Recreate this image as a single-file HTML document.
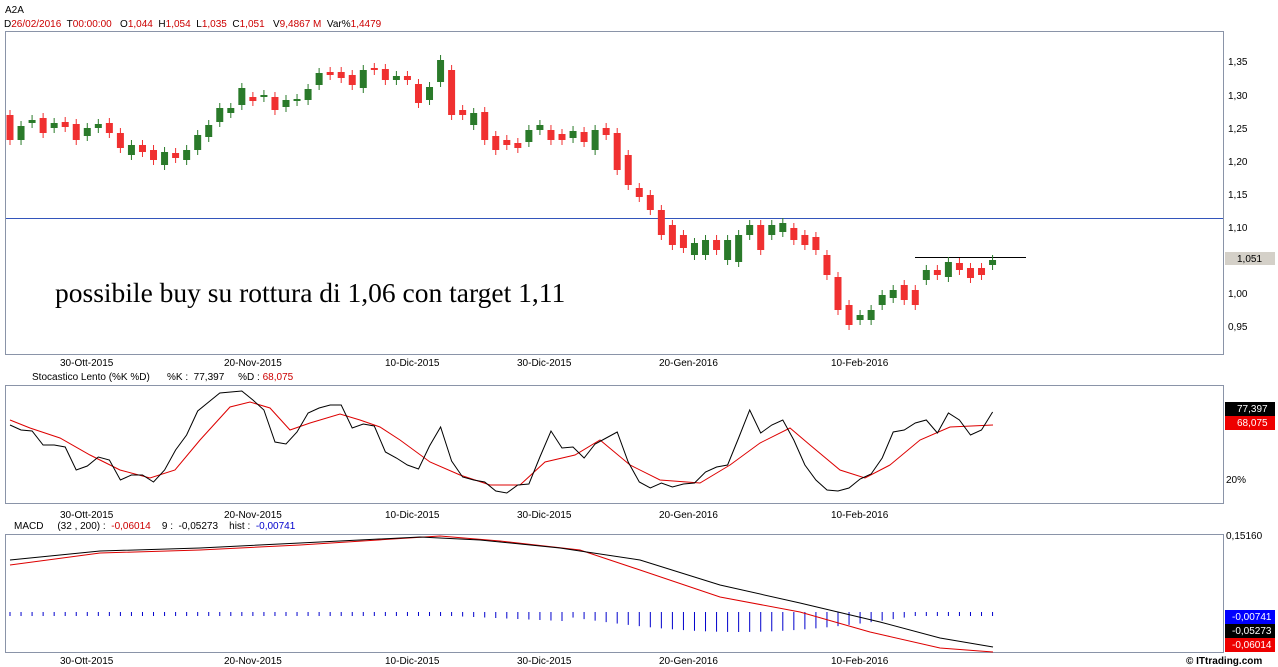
<!DOCTYPE html>
<html><head><meta charset="utf-8"><style>
body{margin:0;background:#fff;width:1278px;height:667px;overflow:hidden;font-family:"Liberation Sans",Arial,sans-serif}
svg{display:block}
text{font-family:"Liberation Sans",Arial,sans-serif;font-size:10px;white-space:pre}
</style></head><body>
<svg id="s" width="1278" height="667" xmlns="http://www.w3.org/2000/svg" xml:space="preserve">
<text x="5" y="13" font-size="11">A2A</text>
<text x="4" y="27" font-size="10.5" fill="#000">D<tspan fill="#c00">26/02/2016</tspan>  T<tspan fill="#c00">00:00:00</tspan>   O<tspan fill="#c00">1,044</tspan>  H<tspan fill="#c00">1,054</tspan>  L<tspan fill="#c00">1,035</tspan>  C<tspan fill="#c00">1,051</tspan>   V<tspan fill="#c00">9,4867 M</tspan>  Var%<tspan fill="#c00">1,4479</tspan></text>
<rect x="5.5" y="31.5" width="1218" height="323" fill="none" stroke="#8a94a8"/>
<rect x="5.5" y="385.5" width="1218" height="118" fill="none" stroke="#8a94a8"/>
<rect x="5.5" y="534.5" width="1218" height="118" fill="none" stroke="#8a94a8"/>
<line x1="6" y1="218.5" x2="1223" y2="218.5" stroke="#3355bb"/>
<line x1="915" y1="257.5" x2="1026" y2="257.5" stroke="#000"/>
<text x="55" y="302" style="font-family:'Liberation Serif',serif;font-size:27.5px">possibile buy su rottura di 1,06 con target 1,11</text>
<g id="c"></g>
<g font-size="9.5">
<text x="1228" y="65">1,35</text><text x="1228" y="99">1,30</text><text x="1228" y="132">1,25</text><text x="1228" y="165">1,20</text><text x="1228" y="198">1,15</text><text x="1228" y="231">1,10</text><text x="1228" y="297">1,00</text><text x="1228" y="330">0,95</text>
</g>
<rect x="1225" y="252" width="50" height="13" fill="#d4d0c8"/><text x="1237" y="262" font-size="9.5">1,051</text>
<g font-size="9.5" id="dates"></g>
<text x="32" y="380" font-size="9.5">Stocastico Lento (%K %D)</text>
<text x="167" y="380" font-size="9.5">%K :  77,397     %D : <tspan fill="#c00">68,075</tspan></text>
<rect x="1225" y="402" width="50" height="14" fill="#000"/><text x="1237" y="412" fill="#fff" font-size="9.5">77,397</text>
<rect x="1225" y="416" width="50" height="14" fill="#e00"/><text x="1237" y="426" fill="#fff" font-size="9.5">68,075</text>
<text x="1226" y="483" font-size="9.5">20%</text>
<text x="14" y="529" font-size="9.5">MACD     (32 , 200) :  <tspan fill="#c00">-0,06014</tspan>    9 :  -0,05273    hist :  <tspan fill="#00c">-0,00741</tspan></text>
<text x="1226" y="539" font-size="9.5">0,15160</text>
<rect x="1225" y="610" width="50" height="14" fill="#00f"/><text x="1232" y="620" fill="#fff" font-size="9.5">-0,00741</text>
<rect x="1225" y="624" width="50" height="14" fill="#000"/><text x="1232" y="634" fill="#fff" font-size="9.5">-0,05273</text>
<rect x="1225" y="638" width="50" height="14" fill="#e00"/><text x="1232" y="648" fill="#fff" font-size="9.5">-0,06014</text>
<text x="1186" y="664" font-size="10" font-weight="bold">© ITtrading.com</text>
<g id="st"></g><g id="mc"></g>
</svg>
<script>
var C=[[115,140,'r'],[126,140,'g'],[120,123,'g'],[118,133,'r'],[123,128,'g'],[122,127,'r'],[124,140,'r'],[128,136,'g'],[124,128,'g'],[123,133,'r'],[133,148,'r'],[145,155,'g'],[145,152,'r'],[150,160,'r'],[152,165,'g'],[153,158,'r'],[150,160,'g'],[135,150,'g'],[125,137,'g'],[108,122,'g'],[108,113,'g'],[88,105,'g'],[97,101,'r'],[95,97,'g'],[97,110,'r'],[100,107,'g'],[99,101,'g'],[89,100,'g'],[73,85,'g'],[72,75,'r'],[72,78,'r'],[75,85,'r'],[70,88,'g'],[68,70,'r'],[69,80,'r'],[76,80,'g'],[76,80,'r'],[84,103,'r'],[87,100,'g'],[60,82,'g'],[70,115,'r'],[110,115,'r'],[113,125,'g'],[112,140,'r'],[136,150,'r'],[140,145,'r'],[143,148,'r'],[130,142,'g'],[125,130,'g'],[130,140,'r'],[134,140,'r'],[131,138,'g'],[132,142,'r'],[130,150,'g'],[128,135,'r'],[133,170,'r'],[155,185,'r'],[188,197,'r'],[195,210,'r'],[210,235,'r'],[225,245,'r'],[235,248,'r'],[243,255,'g'],[240,255,'g'],[240,250,'r'],[240,260,'g'],[235,262,'g'],[225,235,'g'],[225,250,'r'],[225,235,'g'],[223,232,'g'],[228,240,'r'],[235,245,'r'],[237,250,'r'],[255,275,'r'],[277,310,'r'],[305,325,'r'],[315,320,'g'],[310,320,'g'],[295,305,'g'],[290,298,'g'],[285,300,'r'],[290,305,'r'],[270,280,'g'],[270,275,'r'],[262,277,'g'],[263,270,'r'],[268,278,'r'],[268,275,'r'],[260,265,'g']];
var h='';C.forEach(function(c,i){var x=10+i*11.04,col=c[2]=='r'?'#f03030':'#2a7a2a';
h+='<line x1="'+x+'" x2="'+x+'" y1="'+(c[0]-5)+'" y2="'+(c[1]+5)+'" stroke="'+col+'"/>';
h+='<rect x="'+(x-3.5)+'" y="'+c[0]+'" width="7" height="'+Math.max(2,c[1]-c[0])+'" fill="'+col+'"/>';});
document.getElementById('c').innerHTML=h;
var d=[[60,'30-Ott-2015'],[224,'20-Nov-2015'],[385,'10-Dic-2015'],[517,'30-Dic-2015'],[659,'20-Gen-2016'],[831,'10-Feb-2016']],dh='';
[366,518,664].forEach(function(y){d.forEach(function(e){dh+='<text x="'+e[0]+'" y="'+y+'">'+e[1]+'</text>';});});
document.getElementById('dates').innerHTML=dh;
var K=[425,430,431,445,445,447,470,466,457,460,480,475,475,482,470,450,435,411,402,393,392,391,400,410,442,444,432,413,408,405,405,428,424,426,452,458,465,469,446,427,461,477,480,482,491,493,485,484,457,431,448,447,458,444,438,432,462,482,488,483,487,484,483,472,467,465,438,410,433,425,420,440,465,480,490,491,488,479,474,458,432,430,423,420,433,413,420,435,430,412];
var kp=K.map(function(y,i){return (10+i*11.04).toFixed(1)+','+y}).join(' ');
var D='10,420 30,428 60,438 90,455 120,470 150,478 175,470 200,440 230,407 250,402 270,408 290,430 310,423 340,414 360,420 380,427 400,440 430,462 460,475 490,485 520,485 545,462 575,455 600,440 630,465 660,480 700,483 730,465 760,443 790,428 810,445 840,470 865,478 890,465 920,440 950,427 993,425';
document.getElementById('st').innerHTML='<polyline points="'+D+'" fill="none" stroke="#d00"/><polyline points="'+kp+'" fill="none" stroke="#000"/>';
var m='';
for(var i=0;i<90;i++){var x=10+i*11.04;
var hl=4+ (i>50&&i<82? 16*Math.sin((i-50)/32*Math.PI):(i>40&&i<=50?(i-40)*0.5:0));
m+='<line x1="'+x+'" x2="'+x+'" y1="612" y2="'+(612+hl)+'" stroke="#00c"/>';}
var bk=[[10,560],[100,551],[200,548],[300,543],[420,537],[480,540],[560,548],[640,560],[720,585],[800,603],[880,622],[940,638],[993,647]];
var rd=[[10,565],[100,553],[200,550],[300,545],[440,536],[500,541],[580,550],[640,570],[720,597],[800,612],[870,632],[940,648],[993,652]];
var mk=bk.map(function(p){return p.join(',')}).join(' '),mr=rd.map(function(p){return p.join(',')}).join(' ');
document.getElementById('mc').innerHTML=m+'<polyline points="'+mr+'" fill="none" stroke="#d00"/><polyline points="'+mk+'" fill="none" stroke="#000"/>';
</script>
</body></html>
